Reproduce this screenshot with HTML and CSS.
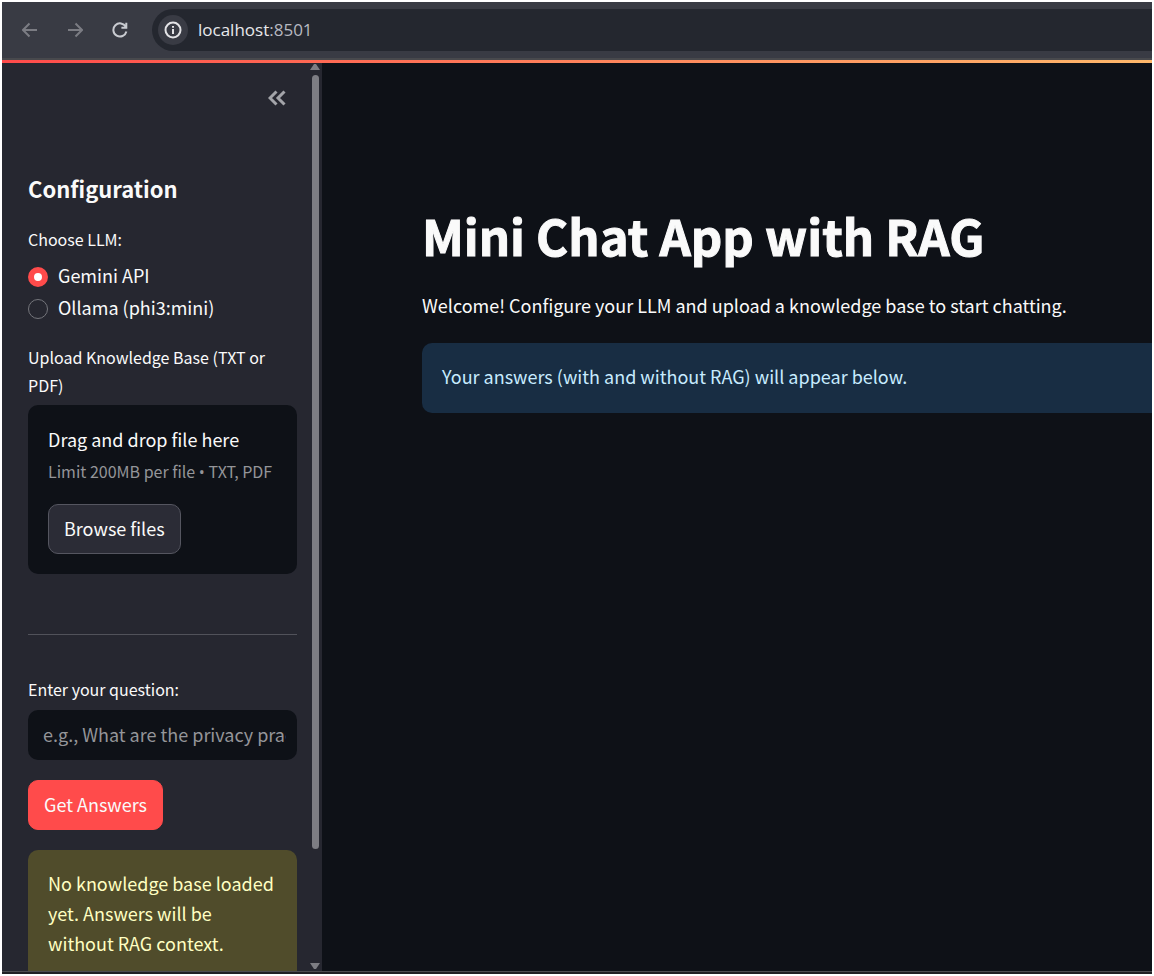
FILE: index.html
```html
<!DOCTYPE html>
<html lang="en">
<head>
<meta charset="utf-8">
<title>Mini Chat App with RAG</title>
<link rel="stylesheet" href="styles.css">
</head>
<body>
<div class="window">
  <header class="toolbar">
    <nav class="nav" aria-label="Browser">
      <button class="nav-btn dim" aria-label="Back"><svg viewBox="0 0 16 16"><path d="M15 8H1.500M7.500 1.500 1 8l6.500 6.500"/></svg></button>
      <button class="nav-btn dim" aria-label="Forward"><svg viewBox="0 0 16 16"><path d="M1 8h13.500M8.500 1.500 15 8l-6.500 6.500"/></svg></button>
      <button class="nav-btn" aria-label="Reload"><svg viewBox="0 0 16 16"><path d="M13.800 4.800A6.600 6.600 0 1 0 14.400 9.500M14.300 .8v4.900H9.400"/></svg></button>
    </nav>
    <div class="address">
      <button class="info" aria-label="Site information"><svg viewBox="0 0 18 18"><circle cx="9" cy="9" r="7.500"/><path d="M9 8v5M9 5v1.800"/></svg></button>
      <span class="url">localhost<span class="port">:8501</span></span>
    </div>
  </header>
  <div class="accent"></div>
  <div class="app">
    <aside class="sidebar">
      <div class="side-content">
        <div class="side-head">
          <button class="collapse" aria-label="Collapse sidebar"><svg viewBox="0 0 18 16"><path d="M8.500 1.500 2 8l6.500 6.500M16.500 1.500 10 8l6.500 6.500"/></svg></button>
        </div>
        <h2 class="side-title">Configuration</h2>
        <fieldset class="choices">
          <legend class="label">Choose LLM:</legend>
          <label class="choice"><input class="radio" type="radio" name="llm" checked>Gemini API</label>
          <label class="choice"><input class="radio" type="radio" name="llm">Ollama (phi3:mini)</label>
        </fieldset>
        <div class="label" id="upload-label">Upload Knowledge Base (TXT or PDF)</div>
        <section class="dropzone" aria-labelledby="upload-label">
          <div class="drop-title">Drag and drop file here</div>
          <div class="drop-hint">Limit 200MB per file <span class="bullet">•</span> TXT, PDF</div>
          <button class="btn">Browse files</button>
        </section>
        <hr class="divider">
        <label class="label" for="question">Enter your question:</label>
        <input class="field" id="question" type="text" placeholder="e.g., What are the privacy practices?">
        <button class="btn primary">Get Answers</button>
        <div class="alert warning">No knowledge base loaded yet. Answers will be without RAG context.</div>
      </div>
      <div class="scrollbar" aria-hidden="true">
        <svg class="arrow" viewBox="0 0 10 6"><path d="M4 0h2l4 6H0z"/></svg>
        <div class="track"><div class="thumb"></div></div>
        <svg class="arrow" viewBox="0 0 10 6"><path d="M4 6h2l4-6H0z"/></svg>
      </div>
    </aside>
    <main class="main">
      <h1 class="title">Mini Chat App with RAG</h1>
      <p class="intro">Welcome! Configure your LLM and upload a knowledge base to start chatting.</p>
      <div class="alert notice">Your answers (with and without RAG) will appear below.</div>
    </main>
  </div>
  <div class="edge"></div>
</div>
</body>
</html>
```
FILE: styles.css
```css
* { box-sizing: border-box; }
body {
  margin: 0;
  background: #fff;
  color: #fafafa;
  font: 18px/30px "Noto Sans CJK SC", "Noto Sans", sans-serif;
}
button, input { font: inherit; color: inherit; }
button { border: 0; padding: 0; background: none; }
svg { display: block; fill: none; stroke: currentColor; stroke-width: 2; }

.window {
  display: flex;
  flex-direction: column;
  height: 100vh;
  border: 2px solid #fff;
  overflow: hidden;
  background: #0e1117;
}
.toolbar {
  flex: none;
  display: flex;
  align-items: center;
  height: 58px;
  background: #393b44;
  border-bottom: 2px solid #48494d;
}
.nav { display: flex; gap: 29px; padding: 0 24px 0 20px; }
.nav-btn { width: 16px; height: 16px; color: #c9cbd1; }
.nav-btn.dim { color: #7b7c83; }
.address {
  flex: 1;
  display: flex;
  align-items: center;
  gap: 10px;
  height: 42px;
  padding-left: 6px;
  border-radius: 21px 0 0 21px;
  background: #24272f;
}
.info {
  display: grid;
  place-items: center;
  width: 30px;
  height: 30px;
  border-radius: 50%;
  background: #393b44;
  color: #e3e3e6;
}
.info svg { width: 18px; height: 18px; }
.url { font-family: "Open Sans", "Noto Sans", sans-serif; font-size: 17px; color: #e8e9ec; }
.port { color: #b7b9c0; }
.accent { flex: none; height: 3px; background: linear-gradient(90deg, #ff4b4b, #ffb86b); }

.app { flex: 1; display: flex; min-height: 0; }
.sidebar {
  flex: none;
  display: flex;
  width: 320px;
  overflow: hidden;
  background: #262730;
}
.side-content { flex: 1; min-width: 0; padding: 20px 13px 0 26px; }
.side-head { display: flex; justify-content: flex-end; height: 87px; padding: 7px 11px 0 0; }
.collapse { width: 18px; height: 16px; color: #a3a4a9; }
.collapse svg { stroke-width: 3; }
.side-title { margin: 0; font-size: 22px; line-height: 36px; font-weight: 600; }
.label { display: block; padding: 0; font-size: 16px; line-height: 28px; }
.choices { margin: 19px 0 20px; padding: 0; border: 0; }
.choices .label { margin-bottom: 6px; }
.choice { display: flex; align-items: center; gap: 10px; height: 32px; }
.radio {
  appearance: none;
  width: 20px;
  height: 20px;
  margin: 4px 0 0;
  border: 1px solid #74757b;
  border-radius: 50%;
}
.radio:checked { border: 6px solid #ff4b4b; background: #fff; }
.dropzone { margin-top: 6px; padding: 19px 20px 20px; border-radius: 10px; background: #0e1117; }
.drop-hint { margin: 4px 0 19px; font-size: 16px; line-height: 27px; color: #949599; white-space: nowrap; }
.bullet { font-family: "Open Sans", sans-serif; line-height: 16px; }
.btn {
  display: block;
  height: 50px;
  padding: 0 15px 3px;
  border: 1px solid #555660;
  border-radius: 10px;
  background: #2b2c36;
}
.btn.primary { margin: 20px 0; border-color: #ff4b4b; background: #ff4b4b; }
.divider { height: 1px; margin: 60px 0 40px; border: 0; background: #51525a; }
.field {
  display: block;
  width: 100%;
  height: 50px;
  margin-top: 7px;
  padding: 0 11px 3px 15px;
  border: 0;
  border-radius: 10px;
  background: #0e1117;
}
.field::placeholder { color: #949599; opacity: 1; }
.alert { padding: 18px 20px 22px; border-radius: 10px; }
.warning { background: #504c2b; color: #ffffc2; }
.notice { border-radius: 10px 0 0 10px; background: #182d43; color: #c7ebff; }

.scrollbar { flex: none; display: flex; flex-direction: column; align-items: center; width: 12px; padding: 1px 2px 2px 0; }
.arrow { flex: none; width: 10px; height: 6px; fill: #7d7d83; stroke: none; }
.track { flex: 1; width: 7px; padding: 5px 0 9px; }
.thumb { height: 88%; border-radius: 4px; background: #7d7d83; }

.main { flex: 1; min-width: 0; padding: 138px 0 0 100px; }
.title { margin: 0; font-size: 49px; line-height: 68px; font-weight: 700; -webkit-text-stroke: 1px currentColor; }
.intro { margin: 21px 0 23px; }
.edge { flex: none; height: 3px; border-top: 1px solid #4c4c50; background: #201f23; }
```
